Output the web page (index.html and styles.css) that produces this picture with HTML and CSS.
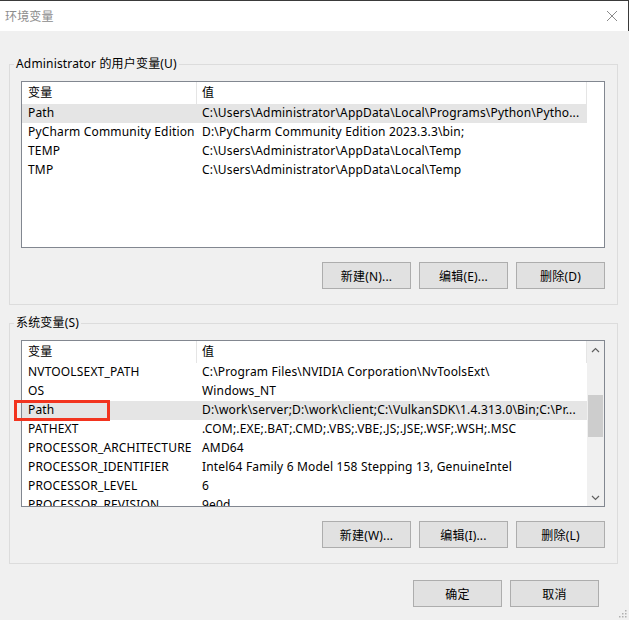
FILE: index.html
```html
<!DOCTYPE html>
<html lang="zh-CN">
<head>
    <meta charset="UTF-8">
    <meta name="viewport" content="width=device-width, initial-scale=1.0">
    <title>环境变量</title>
    <link rel="stylesheet" href="styles.css">
</head>
<body>
    <div class="titlebar">
        <span class="title">环境变量</span>
        <svg class="close" width="12" height="12" viewBox="0 0 12 12">
            <path d="M1 1L11 11M11 1L1 11" stroke="#8a8a8a" stroke-width="1" fill="none"/>
        </svg>
    </div>

    <div class="content">
        <section class="group">
            <div class="group-title">Administrator 的用户变量(U)</div>
            <div class="list">
                <div class="list-body">
                    <div class="list-main">
                        <div class="list-head">
                            <div class="col">变量</div>
                            <div class="col">值</div>
                        </div>
                        <div class="row selected">
                            <div class="col">Path</div>
                            <div class="col">C:\Users\Administrator\AppData\Local\Programs\Python\Pytho...</div>
                        </div>
                        <div class="row">
                            <div class="col">PyCharm Community Edition</div>
                            <div class="col">D:\PyCharm Community Edition 2023.3.3\bin;</div>
                        </div>
                        <div class="row">
                            <div class="col">TEMP</div>
                            <div class="col">C:\Users\Administrator\AppData\Local\Temp</div>
                        </div>
                        <div class="row">
                            <div class="col">TMP</div>
                            <div class="col">C:\Users\Administrator\AppData\Local\Temp</div>
                        </div>
                    </div>
                </div>
            </div>
            <div class="buttons">
                <button>新建(N)...</button>
                <button>编辑(E)...</button>
                <button>删除(D)</button>
            </div>
        </section>

        <section class="group system">
            <div class="group-title">系统变量(S)</div>
            <div class="list">
                <div class="list-body">
                    <div class="list-main">
                        <div class="list-head">
                            <div class="col">变量</div>
                            <div class="col">值</div>
                        </div>
                        <div class="row">
                            <div class="col">NVTOOLSEXT_PATH</div>
                            <div class="col">C:\Program Files\NVIDIA Corporation\NvToolsExt\</div>
                        </div>
                        <div class="row">
                            <div class="col">OS</div>
                            <div class="col">Windows_NT</div>
                        </div>
                        <div class="row selected">
                            <div class="col">Path</div>
                            <div class="col">D:\work\server;D:\work\client;C:\VulkanSDK\1.4.313.0\Bin;C:\Pr...</div>
                        </div>
                        <div class="row">
                            <div class="col">PATHEXT</div>
                            <div class="col">.COM;.EXE;.BAT;.CMD;.VBS;.VBE;.JS;.JSE;.WSF;.WSH;.MSC</div>
                        </div>
                        <div class="row">
                            <div class="col">PROCESSOR_ARCHITECTURE</div>
                            <div class="col">AMD64</div>
                        </div>
                        <div class="row">
                            <div class="col">PROCESSOR_IDENTIFIER</div>
                            <div class="col">Intel64 Family 6 Model 158 Stepping 13, GenuineIntel</div>
                        </div>
                        <div class="row">
                            <div class="col">PROCESSOR_LEVEL</div>
                            <div class="col">6</div>
                        </div>
                        <div class="row">
                            <div class="col">PROCESSOR_REVISION</div>
                            <div class="col">9e0d</div>
                        </div>
                    </div>
                    <div class="scrollbar">
                        <div class="arrow">
                            <svg width="9" height="6" viewBox="0 0 9 6"><path d="M1 5L4.5 1.5L8 5" stroke="#606060" stroke-width="1.2" fill="none"/></svg>
                        </div>
                        <div class="track"><div class="thumb"></div></div>
                        <div class="arrow">
                            <svg width="9" height="6" viewBox="0 0 9 6"><path d="M1 1L4.5 4.5L8 1" stroke="#606060" stroke-width="1.2" fill="none"/></svg>
                        </div>
                    </div>
                </div>
                <!-- 标注框 -->
                <div class="mark"></div>
            </div>
            <div class="buttons">
                <button>新建(W)...</button>
                <button>编辑(I)...</button>
                <button>删除(L)</button>
            </div>
        </section>

        <div class="footer">
            <button>确定</button>
            <button>取消</button>
        </div>
    </div>

    <svg class="grip" width="8" height="8" viewBox="0 0 8 8">
        <rect x="6" y="0" width="1.5" height="1.5" fill="#b0b0b0"/>
        <rect x="3" y="3" width="1.5" height="1.5" fill="#b0b0b0"/>
        <rect x="6" y="3" width="1.5" height="1.5" fill="#b0b0b0"/>
        <rect x="0" y="6" width="1.5" height="1.5" fill="#b0b0b0"/>
        <rect x="3" y="6" width="1.5" height="1.5" fill="#b0b0b0"/>
        <rect x="6" y="6" width="1.5" height="1.5" fill="#b0b0b0"/>
    </svg>
</body>
</html>
```

FILE: styles.css
```css
* {
    margin: 0;
    padding: 0;
    box-sizing: border-box;
}

body {
    font-family: "Noto Sans", "Noto Sans CJK SC", sans-serif;
    font-size: 12px;
    letter-spacing: 0.17px;
    color: #000;
    background: #f0f0f0;
    min-height: 100vh;
    position: relative;
}

.titlebar {
    height: 31px;
    background: #fff;
    border-top: 1px solid #3a3a3a;
    border-right: 1px solid #3a3a3a;
    display: flex;
    align-items: center;
    justify-content: space-between;
    padding: 0 10px 0 5px;
}

.title {
    color: #8c8c8c;
}

.content {
    padding-top: 33px;
}

.group {
    border: 1px solid #dcdcdc;
    margin: 0 11px 0 9px;
    padding: 0 12px 15px 11px;
}

.group.system {
    margin-top: 18px;
}

.group-title {
    width: fit-content;
    margin: -9px 0 0 -7px;
    padding: 0 2px;
    line-height: 16px;
    background: #f0f0f0;
}

.list {
    position: relative;
    margin-top: 9px;
    height: 167px;
    border: 1px solid #828790;
    background: #fff;
}

.list-body {
    display: flex;
    height: 100%;
    overflow: hidden;
}

.list-main {
    width: 565px;
}

.list-head,
.row {
    display: grid;
    grid-template-columns: 175px 390px;
    white-space: nowrap;
}

.list-head {
    height: 22px;
    line-height: 22px;
}

.list-head .col {
    border-right: 1px solid #e5e5e5;
}

.row {
    height: 19px;
    line-height: 18px;
}

.row.selected {
    background: #e5e5e5;
}

.col {
    overflow: hidden;
    padding-left: 6px;
}

.col + .col {
    padding-left: 5px;
}

.scrollbar {
    width: 17px;
    background: #f0f0f0;
    display: flex;
    flex-direction: column;
}

.arrow {
    height: 17px;
    display: flex;
    align-items: center;
    justify-content: center;
}

.track {
    flex: 1;
}

.thumb {
    margin: 37px 1px 0;
    height: 42px;
    background: #cdcdcd;
}

.mark {
    position: absolute;
    left: -8px;
    top: 59px;
    width: 96px;
    height: 21px;
    border: 3px solid #f2341f;
}

.buttons {
    display: flex;
    justify-content: flex-end;
    gap: 8px;
    margin-top: 14px;
}

button {
    width: 89px;
    height: 27px;
    font-family: inherit;
    font-size: 12px;
    letter-spacing: inherit;
    color: #000;
    background: #e1e1e1;
    border: 1px solid #adadad;
}

.footer {
    display: flex;
    justify-content: flex-end;
    gap: 8px;
    margin-top: 16px;
    padding-right: 30px;
}

.grip {
    position: absolute;
    right: 2px;
    bottom: 2px;
}
```
